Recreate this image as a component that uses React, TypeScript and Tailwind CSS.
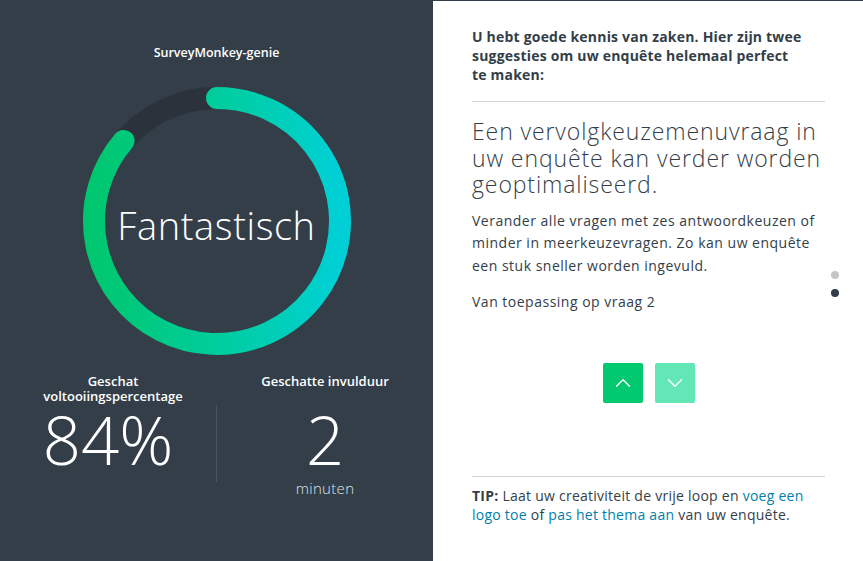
import { ChevronUp, ChevronDown } from "lucide-react"

function Ring() {
  const r = 123
  const cx = 140
  const cy = 140
  const sweep = 310.6
  const rad = (sweep * Math.PI) / 180
  const ex = cx + r * Math.sin(rad)
  const ey = cy - r * Math.cos(rad)
  const d = `M ${cx} ${cy - r} A ${r} ${r} 0 1 1 ${ex} ${ey}`

  return (
    <div className="relative mx-auto h-[280px] w-[280px]">
      <svg width="280" height="280" viewBox="0 0 280 280">
        <defs>
          <linearGradient id="ring" x1="0" y1="0" x2="1" y2="0">
            <stop offset="0%" stopColor="#00c76f" />
            <stop offset="50%" stopColor="#00cd9c" />
            <stop offset="100%" stopColor="#00d0d6" />
          </linearGradient>
        </defs>
        <circle cx={cx} cy={cy} r={r} fill="none" stroke="#2b323c" strokeWidth="22" />
        <path d={d} fill="none" stroke="url(#ring)" strokeWidth="22" strokeLinecap="round" />
      </svg>
      <div className="absolute inset-0 flex items-center justify-center pt-[8px]">
        <span className="text-[38px] font-light tracking-[0.6px] text-white">Fantastisch</span>
      </div>
    </div>
  )
}

export default function App() {
  return (
    <div className="flex h-[561px] w-[863px] font-['Open_Sans',sans-serif] text-[#333e48]">
      <section className="flex w-[433px] flex-col bg-[#333e49] text-white">
        <h2 className="mt-[44px] mb-[19px] text-center text-[12.5px] font-semibold leading-[18px]">SurveyMonkey-genie</h2>
        <Ring />
        <div className="mt-[13px] grid grid-cols-[216px_1px_1fr]">
          <p className="col-start-1 row-start-1 text-center text-[13px] font-semibold leading-[15px]">
            <span className="block pl-[10px]">Geschat</span>
            <span className="block pl-[10px]">voltooiingspercentage</span>
          </p>
          <p className="col-start-3 row-start-1 text-center text-[13px] font-semibold leading-[15px]">Geschatte invulduur</p>
          <div className="col-start-1 row-start-2 -mt-[2px] text-center text-[67px] font-light leading-[74px]">84%</div>
          <div className="col-start-2 row-start-2 mt-[1px] h-[77px] bg-[#4a545f]" />
          <div className="col-start-3 row-start-2 -mt-[2px] flex flex-col items-center">
            <span className="text-[67px] font-light leading-[74px]">2</span>
            <span className="mt-[2px] text-[15px] font-light leading-[20px] tracking-[0.3px] text-[#dfe2e5]">minuten</span>
          </div>
        </div>
      </section>

      <section className="relative flex flex-1 flex-col border-t border-[#333e48] bg-white pl-[39px] pr-[38px]">
        <p className="mt-[26px] max-w-[333px] text-[14px] font-bold leading-[19px] tracking-[0.2px]">
          U hebt goede kennis van zaken. Hier zijn twee suggesties om uw enquête helemaal perfect te maken:
        </p>
        <div className="mt-[17px] h-px bg-[#d0d2d3]" />
        <h3 className="mt-[16px] text-[23px] font-light leading-[26.5px] tracking-[0.9px]">
          Een vervolgkeuzemenuvraag in uw enquête kan verder worden geoptimaliseerd.
        </h3>
        <p className="mt-[12px] text-[14px] leading-[22.5px] tracking-[0.5px]">
          Verander alle vragen met zes antwoordkeuzen of minder in meerkeuzevragen. Zo kan uw enquête een stuk sneller worden ingevuld.
        </p>
        <p className="mt-[14px] text-[14px] leading-[22px] tracking-[0.5px]">Van toepassing op vraag 2</p>

        <div className="mt-[50px] flex justify-center gap-[12px]">
          <button className="flex h-[40px] w-[40px] items-center justify-center rounded-[2px] bg-[#00c96f] text-white">
            <ChevronUp size={26} strokeWidth={1.3} />
          </button>
          <button className="flex h-[40px] w-[40px] items-center justify-center rounded-[2px] bg-[#64e7b7] text-white">
            <ChevronDown size={26} strokeWidth={1.3} />
          </button>
        </div>

        <div className="mt-auto mb-[37px]">
          <div className="h-px bg-[#d0d2d3]" />
          <p className="mt-[9px] text-[14px] leading-[19px] tracking-[0.25px]">
            <span className="font-bold">TIP:</span> Laat uw creativiteit de vrije loop en{" "}
            <a className="text-[#007faa]">voeg een logo toe</a> of{" "}
            <a className="text-[#007faa]">pas het thema aan</a> van uw enquête.
          </p>
        </div>

        <div className="absolute right-[24px] top-[270px] flex flex-col gap-[10px]">
          <span className="block h-[8px] w-[8px] rounded-full bg-[#c4c7ca]" />
          <span className="block h-[8px] w-[8px] rounded-full bg-[#333e48]" />
        </div>
      </section>
    </div>
  )
}
